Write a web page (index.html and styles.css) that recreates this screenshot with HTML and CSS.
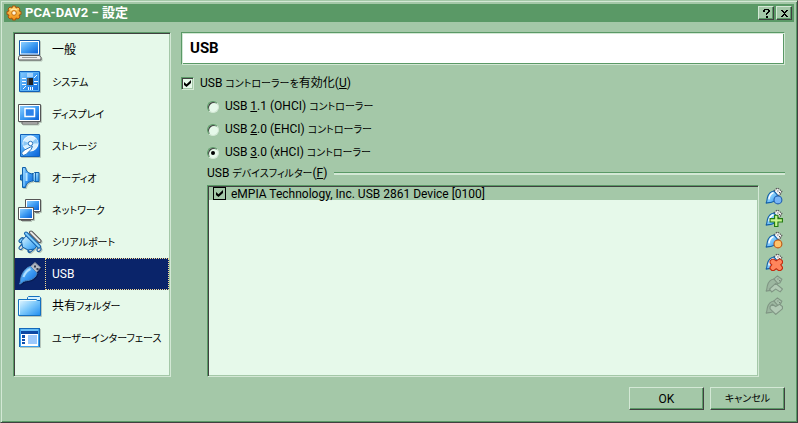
FILE: index.html
```html
<!DOCTYPE html>
<html lang="ja">
<head>
<meta charset="utf-8">
<meta name="viewport" content="width=device-width, initial-scale=1">
<title>PCA-DAV2 - 設定</title>
<link rel="stylesheet" href="styles.css">
</head>
<body>
<svg class="defs" width="0" height="0" aria-hidden="true">
  <defs>
    <linearGradient id="screen" x1="0" y1="0" x2="1" y2="1"><stop offset="0" stop-color="#8fd0ff"/><stop offset=".5" stop-color="#3d9bf2"/><stop offset="1" stop-color="#0a62d8"/></linearGradient>
    <linearGradient id="pale" x1="0" y1="0" x2="1" y2="1"><stop offset="0" stop-color="#eafaff"/><stop offset=".5" stop-color="#7cc8fb"/><stop offset="1" stop-color="#1f8cf0"/></linearGradient>
    <linearGradient id="gold" x1="0" y1="0" x2="0" y2="1"><stop offset="0" stop-color="#ffd66e"/><stop offset="1" stop-color="#f08c10"/></linearGradient>
    <symbol id="plug" viewBox="0 0 16 16">
      <path d="M8 3.500 11 .8l4 3-1.600 3.200-3 1z" fill="#f4f4f4" stroke="#555" stroke-width="1" stroke-dasharray="1.500 .7"/>
      <path d="M11 3h1v1h-1zM12.500 4.500h1v1h-1z" fill="#444"/>
      <path d="M.8 14.500c1-1 .8-3 1.400-5.200C3 6.500 5 4 8 3.600l3 3.400c0 3-2 5.500-5 6.500-1.800.6-3.500.2-5.200 1z" fill="url(#pale)" stroke="#1460a8"/>
      <path d="M3.500 11c.2-3 1.800-5 4-6" fill="none" stroke="#fff" stroke-width="1.200"/>
    </symbol>
    <symbol id="plug-off" viewBox="0 0 16 16">
      <path d="M8 3.500 11 .8l4 3-1.600 3.200-3 1z" fill="#a9c2ac" stroke="#809684"/>
      <path d="M11 3h1v1h-1zM12.500 4.500h1v1h-1z" fill="#708574"/>
      <path d="M.8 14.500c1-1 .8-3 1.400-5.200C3 6.500 5 4 8 3.600l3 3.400c0 3-2 5.500-5 6.500-1.800.6-3.500.2-5.200 1z" fill="#9cb7a0" stroke="#809684"/>
    </symbol>
  </defs>
</svg>

<div class="window">
  <header class="titlebar">
    <svg class="titlebar-icon" viewBox="0 0 16 16" aria-hidden="true">
      <path d="M6.500 1h3l.5 2 2-1 2 2-1 2 2 .5v3l-2 .5 1 2-2 2-2-1-.5 2h-3L6 13l-2 1-2-2 1-2-2-.5v-3L3 6 2 4l2-2 2 1z" fill="url(#gold)" stroke="#a8530a"/>
      <path d="M4.500 5.500C6 3.800 9 3.500 11 5" fill="none" stroke="#ffe9a8" stroke-width="1.200"/>
      <circle cx="8" cy="8" r="2.300" fill="#fff7dc" stroke="#c46a0a"/>
    </svg>
    <h1 class="titlebar-text">PCA-DAV2 − 設定</h1>
    <button class="caption-button" type="button" aria-label="ヘルプ">
      <svg viewBox="0 0 9 9" shape-rendering="crispEdges" aria-hidden="true"><path d="M2 0h5v1h1v2H7v1H6v1H5v1H4V4h1V3h1V1H3v2H1V1h1zM4 7h2v2H4z"/></svg>
    </button>
    <button class="caption-button" type="button" aria-label="閉じる">
      <svg viewBox="0 0 9 9" shape-rendering="crispEdges" aria-hidden="true"><path d="M1 1h2v1h1v1h1V2h1V1h2v1H7v1H6v1H5v1h1v1h1v1h1v1H6V7H5V6H4v1H3v1H1V7h1V6h1V5h1V4H3V3H2V2H1z"/></svg>
    </button>
  </header>

  <main class="body">
    <nav class="sidebar">
      <button class="nav-item" type="button">
        <svg viewBox="0 0 24 24" aria-hidden="true"><path d="M1.500 2.500h20V17h-20z" fill="#fff" stroke="#1358a8"/><path d="M3 4h17v11.500H3z" fill="url(#screen)"/><path d="M1.500 17.500h20l1.500 2V22H.5v-2.500z" fill="#eee" stroke="#555"/><path d="M4 19.500h15" stroke="#999"/></svg>
        <span class="nav-label">一般</span>
      </button>
      <button class="nav-item" type="button">
        <svg viewBox="0 0 24 24" aria-hidden="true"><path d="M1.500 1.500h20v20h-20z" fill="url(#screen)" stroke="#1060b8"/><path d="M2.500 2.500h18v18h-18z" fill="none" stroke="#5bb2f5"/><path d="M10 3v4M12 3v4M14 3v4M4 8.500h4M4 11.500h4M4 14.500h4M16 11.500h4M16 14.500h3M16 8l3-3M8 16l-3 3M10.500 17v3M12.500 17v3M14.500 17v3" fill="none" stroke="#f3fbff"/><path d="M9 8h6v7H9z" fill="#222"/><path d="M9 8h2v7H9z" fill="#555"/></svg>
        <span class="nav-label"><span class="kana">システム</span></span>
      </button>
      <button class="nav-item" type="button">
        <svg viewBox="0 0 24 24" aria-hidden="true"><path d="M4 20h16v2H4z" fill="#ddd" stroke="#666"/><path d="M.5 2.500h22v17H.5z" fill="#fff" stroke="#555"/><path d="M2 4h19v14H2z" fill="url(#screen)"/><path d="M7 6.500h9.500v8H7z" fill="#2d83ea" stroke="#fff" stroke-width="1.500"/></svg>
        <span class="nav-label"><span class="kana">ディスプレイ</span></span>
      </button>
      <button class="nav-item" type="button">
        <svg viewBox="0 0 24 24" aria-hidden="true"><path d="M2.500.5h19v22h-19z" fill="url(#screen)" stroke="#1060b8"/><circle cx="12.500" cy="9.500" r="7.500" fill="#d9f0ff" stroke="#fff"/><path d="M12.500 9.500 18 4.500a8 8 0 0 1 2 5zM12.500 9.500 5.500 7l-.3 5z" fill="#8bc7f5"/><circle cx="12.500" cy="9.500" r="2.200" fill="#fff" stroke="#2b75be"/><path d="m3.500 19 3-3 6-3 2-.5-1.500 3-5 5-3 1z" fill="#fff" stroke="#2878c4"/></svg>
        <span class="nav-label"><span class="kana">ストレージ</span></span>
      </button>
      <button class="nav-item" type="button">
        <svg viewBox="0 0 24 24" aria-hidden="true"><path d="M2.500 9h2v5h-2z" fill="#2f8ae2" stroke="#1060a8"/><path d="M14 7.500h1.500l1-1h4.500v9h-4.500l-1-1H14z" fill="url(#pale)" stroke="#1060a8"/><path d="M4.500 1.500h3c.5 4 3 6 7.500 6.500v7c-4.500.5-7 2.500-7.500 6.500h-3z" fill="url(#screen)" stroke="#1060a8"/><path d="M6 3v17" stroke="#9ad8ff"/><path d="M8.500 7v8" stroke="#b9e6ff" stroke-width="2"/><path d="M17.500 7v8" stroke="#1765b0"/></svg>
        <span class="nav-label"><span class="kana">オーディオ</span></span>
      </button>
      <button class="nav-item" type="button">
        <svg viewBox="0 0 24 24" aria-hidden="true"><path d="M7.500 1.500h15v12h-15z" fill="#fff" stroke="#555"/><path d="M9 3h12v9H9z" fill="url(#screen)"/><path d="M17 14.500h4" stroke="#777"/><path d="M.5 9.500h15v12H.5z" fill="#fff" stroke="#555"/><path d="M2 11h12v9H2z" fill="url(#screen)"/><path d="M3 22.500h10" stroke="#666"/></svg>
        <span class="nav-label"><span class="kana">ネットワーク</span></span>
      </button>
      <button class="nav-item" type="button">
        <svg viewBox="0 0 24 24" aria-hidden="true"><path d="m13 2.500 8.500 8.500" stroke="#555" stroke-width="4" stroke-linecap="round"/><path d="m13 2.500 8.500 8.500" stroke="#e8e8e8" stroke-width="2" stroke-linecap="round"/><path d="m2.500 11 2-2M2.500 18l2-2.500M11.500 21l2.500-2M20.500 20l1-1" stroke="#155ca1" stroke-width="4" stroke-linecap="round"/><path d="m2.500 18 1.500-1.500M12 20.500l1.500-1M20.500 20l1-1" stroke="#ddd" stroke-width="2" stroke-linecap="round"/><path d="m2.500 11 1.500-1.500" stroke="#7fccfa" stroke-width="2" stroke-linecap="round"/><path d="m9 5-5.500 6 1 6 5.500 3 6.500-1 3-4z" fill="url(#pale)" stroke="#1060a8"/><path d="m8 3.500 13 13" stroke="#1260ac" stroke-width="4" stroke-linecap="round"/><path d="m8 3.500 13 13" stroke="#7fccfa" stroke-width="2" stroke-linecap="round"/></svg>
        <span class="nav-label"><span class="kana">シリアルポート</span></span>
      </button>
      <button class="nav-item nav-item-selected" type="button" aria-current="page">
        <svg viewBox="0 0 24 24" aria-hidden="true"><path d="m12 5 5-4.500 5.500 5-4.500 5.500z" fill="#b4bac6" stroke="#7a8292"/><path d="M16 3.500h2v2h-2zM18.500 6h2v2h-2z" fill="#333b4d"/><path d="M1.500 22c1.500-2 .5-5.500 2.500-9.500C6 8 9.500 5 12.500 4.500l6.500 6.500c-1 4.500-5 7-9.500 7.500-3 .4-5 1-7 3.500z" fill="url(#screen)" stroke="#4a88c0"/><path d="M5.500 15C7 11 9 8.500 12.500 7" fill="none" stroke="#b0e0ff" stroke-width="2"/></svg>
        <span class="nav-label">USB</span>
      </button>
      <button class="nav-item" type="button">
        <svg viewBox="0 0 24 24" aria-hidden="true"><path d="M9.500 5.500v-2l1-1h11l1 1v17H11z" fill="#d7f2ff" stroke="#1570c0"/><path d="M.5 5.500h18l1 1h3v15H.5z" fill="url(#pale)" stroke="#1570c0"/><path d="M1.500 20.500v-14H18" fill="none" stroke="#e8faff"/></svg>
        <span class="nav-label">共有<span class="kana">フォルダー</span></span>
      </button>
      <button class="nav-item" type="button">
        <svg viewBox="0 0 24 24" shape-rendering="crispEdges" aria-hidden="true"><path d="M1.500 2.500h20v18h-20z" fill="#fff" stroke="#1468b8"/><path d="M2 3h19v3H2z" fill="#65bdf7"/><path d="M3 5h17v3H3z" fill="#0c48a4"/><path d="M2.500 3v17h18V3" fill="none" stroke="#3aa0ee"/><path d="M4 9h3v3H4zM4 13h3v2H4zM4 16h3v2H4z" fill="#0d4fae"/><path d="M10 9h9v9h-9z" fill="#9cc9fc"/></svg>
        <span class="nav-label"><span class="kana">ユーザーインターフェース</span></span>
      </button>
    </nav>

    <section class="page">
      <h2 class="page-title">USB</h2>
      <label class="option"><input class="check" type="checkbox" checked><span>USB <span class="kana">コントローラーを</span>有効化(<u>U</u>)</span></label>
      <div class="details">
        <label class="option"><input class="radio" type="radio" name="controller"><span>USB <u>1</u>.1 (OHCI) <span class="kana">コントローラー</span></span></label>
        <label class="option"><input class="radio" type="radio" name="controller"><span>USB <u>2</u>.0 (EHCI) <span class="kana">コントローラー</span></span></label>
        <label class="option"><input class="radio" type="radio" name="controller" checked><span>USB <u>3</u>.0 (xHCI) <span class="kana">コントローラー</span></span></label>
        <h3 class="group-title"><span>USB <span class="kana">デバイスフィルター</span>(<u>F</u>)</span></h3>
        <div class="filters">
          <ul class="filter-list">
            <li><label class="filter"><input class="check check-flat" type="checkbox" checked><span>eMPIA Technology, Inc. USB 2861 Device [0100]</span></label></li>
          </ul>
          <div class="tools">
            <button class="tool" type="button" aria-label="空のフィルターを追加"><svg viewBox="0 0 16 16" aria-hidden="true"><use href="#plug"/><circle cx="11.500" cy="11.500" r="3.500" fill="#78b5f5" stroke="#225fae"/></svg></button>
            <button class="tool" type="button" aria-label="デバイスからフィルターを追加"><svg viewBox="0 0 16 16" aria-hidden="true"><use href="#plug"/><path d="M8.500 5.500h3v3h4v3h-4v4h-3v-4h-4v-3h4z" fill="#c8f590" stroke="#247c12"/></svg></button>
            <button class="tool" type="button" aria-label="フィルターを編集"><svg viewBox="0 0 16 16" aria-hidden="true"><use href="#plug"/><circle cx="11.500" cy="11.500" r="3.500" fill="#ffc36b" stroke="#bd5615"/></svg></button>
            <button class="tool" type="button" aria-label="フィルターを削除"><svg viewBox="0 0 16 16" aria-hidden="true"><use href="#plug"/><path d="M6 5.500h2l2 1.500 2-1.500h2l1.500 1.500v2L14 10.500l1.500 2v1.500L14 15.500h-2L10 14l-2 1.500H6L4.500 14v-1.500l1.500-2L4.500 9V7z" fill="#ff855c" stroke="#c52c10"/></svg></button>
            <button class="tool" type="button" aria-label="上へ移動" disabled><svg viewBox="0 0 16 16" aria-hidden="true"><use href="#plug-off"/><path d="m9.500 7.500 6 5-2 2.500-4-2.500L6 15l-2-2.500z" fill="#b2cab5" stroke="#809684"/></svg></button>
            <button class="tool" type="button" aria-label="下へ移動" disabled><svg viewBox="0 0 16 16" aria-hidden="true"><use href="#plug-off"/><path d="m9.500 15.500-5-5v-2l2-2 3 2 3.500-2 2.500 2v2z" fill="#b2cab5" stroke="#809684"/></svg></button>
          </div>
        </div>
      </div>
    </section>
  </main>

  <footer class="actions">
    <button class="button" type="button">OK</button>
    <button class="button" type="button"><span class="kana">キャンセル</span></button>
  </footer>
</div>
</body>
</html>
```
FILE: styles.css
```css
:root {
  --face: #a4c8a8;
  --light: #d3e8d5;
  --shade: #5a9966;
  --dark: #404040;
  --field: #e6f9ea;
  --select: #0a246a;
}

* {
  box-sizing: border-box;
}

body {
  margin: 0;
  color: #000;
  background: var(--face);
  font: 12px/16px Roboto, "Noto Sans CJK JP", sans-serif;
  font-feature-settings: "palt";
}

button {
  font: inherit;
  font-feature-settings: inherit;
  color: inherit;
  border-radius: 0;
}

h1, h2, h3, ul {
  margin: 0;
  padding: 0;
}

/* Compact kana beside full-size kanji and Latin */
.kana {
  font-size: 10px;
}

.defs {
  position: absolute;
}

.window {
  display: flex;
  flex-direction: column;
  min-height: 100vh;
  padding: 3px;
  border: 1px solid;
  border-color: var(--face) var(--dark) var(--dark) var(--face);
  box-shadow: inset 1px 1px var(--light), inset -1px -1px var(--shade);
}

/* Title bar */
.titlebar {
  display: flex;
  align-items: center;
  gap: 2px;
  height: 18px;
  padding: 0 2px;
  background: var(--shade);
}

.titlebar-icon {
  width: 16px;
  height: 16px;
}

.titlebar-text {
  flex: 1;
  padding-left: 1px;
  color: #fff;
  font-size: 13px;
  line-height: 18px;
}

.caption-button {
  display: grid;
  place-items: center;
  width: 16px;
  height: 14px;
  padding: 0;
  background: var(--face);
  border: 1px solid;
  border-color: var(--light) var(--dark) var(--dark) var(--light);
  box-shadow: inset -1px -1px var(--shade);
}

.caption-button svg {
  width: 9px;
  height: 9px;
}

/* Body */
.body {
  display: flex;
  flex: 1;
  gap: 10px;
  padding: 10px 9px;
}

.sidebar,
.filter-list {
  background: var(--field);
  border: 1px solid;
  border-color: var(--shade) var(--light) var(--light) var(--shade);
  box-shadow: inset 1px 1px var(--dark), inset -1px -1px var(--face);
}

.sidebar {
  flex: 0 0 158px;
  min-width: 0;
  padding: 1px;
}

.nav-item {
  display: flex;
  align-items: center;
  gap: 3px;
  width: 100%;
  height: 32px;
  padding: 0 0 0 3px;
  background: none;
  border: 0;
  text-align: left;
  white-space: nowrap;
}

.nav-item svg {
  flex: none;
  width: 24px;
  height: 24px;
  filter: drop-shadow(1px 1px 0 rgba(0, 0, 0, 0.2));
}

.nav-label {
  flex: 1;
  height: 32px;
  padding-left: 6px;
  border: 1px dotted transparent;
  line-height: 30px;
}

.nav-item-selected {
  color: #fff;
  background: var(--select);
}

.nav-item-selected .nav-label {
  border-color: #f5db95;
}

/* Settings page */
.page {
  display: flex;
  flex: 1;
  flex-direction: column;
  min-width: 0;
}

.page-title {
  height: 33px;
  margin-bottom: 7px;
  padding-left: 8px;
  background: #fff;
  border: 1px solid;
  border-color: var(--shade) var(--light) var(--light) var(--shade);
  box-shadow: inset 1px 1px var(--light), inset -1px -1px var(--shade);
  font-size: 15px;
  line-height: 31px;
}

.option {
  display: flex;
  align-items: center;
  gap: 6px;
  height: 23px;
}

.check,
.radio {
  display: grid;
  flex: none;
  place-items: center;
  margin: 0;
  appearance: none;
  background: var(--field);
}

.check {
  width: 13px;
  height: 13px;
  border: 1px solid;
  border-color: var(--shade) var(--light) var(--light) var(--shade);
  box-shadow: inset 1px 1px var(--dark), inset -1px -1px var(--face);
}

.check:checked::before {
  content: "";
  width: 7px;
  height: 7px;
  background: #000;
  clip-path: polygon(0 29%, 36% 62%, 100% 0, 100% 42%, 36% 100%, 0 70%);
}

.check-flat {
  background: none;
  border-color: #000;
  box-shadow: none;
}

.radio {
  width: 12px;
  height: 12px;
  border: 1px solid;
  border-color: var(--shade) var(--light) var(--light) var(--shade);
  border-radius: 50%;
  box-shadow: inset 1px 1px var(--dark);
}

.radio:checked::before {
  content: "";
  width: 4px;
  height: 4px;
  background: #000;
  border-radius: 50%;
}

.details {
  display: flex;
  flex: 1;
  flex-direction: column;
  padding-left: 26px;
}

.group-title {
  display: flex;
  align-items: center;
  gap: 7px;
  height: 19px;
  margin-bottom: 2px;
  font-size: 12px;
  font-weight: normal;
}

.group-title::after {
  content: "";
  flex: 1;
  height: 2px;
  background: var(--light);
  border-top: 1px solid var(--shade);
}

.filters {
  display: flex;
  flex: 1;
  gap: 6px;
}

.filter-list {
  flex: 1;
  padding: 1px;
  list-style: none;
}

.filter {
  display: flex;
  align-items: center;
  gap: 5px;
  height: 13px;
  padding-left: 4px;
  background: var(--face);
}

.tools {
  display: flex;
  flex: 0 0 20px;
  flex-direction: column;
  gap: 4px;
  padding-top: 2px;
}

.tool {
  width: 18px;
  height: 18px;
  padding: 0;
  background: none;
  border: 0;
}

.tool svg {
  display: block;
  width: 18px;
  height: 18px;
}

/* Dialog buttons */
.actions {
  display: flex;
  justify-content: flex-end;
  gap: 6px;
  padding: 0 9px 9px;
}

.button {
  width: 75px;
  height: 23px;
  padding: 0;
  background: var(--face);
  border: 1px solid;
  border-color: var(--light) var(--dark) var(--dark) var(--light);
  box-shadow: inset -1px -1px var(--shade);
}
```
